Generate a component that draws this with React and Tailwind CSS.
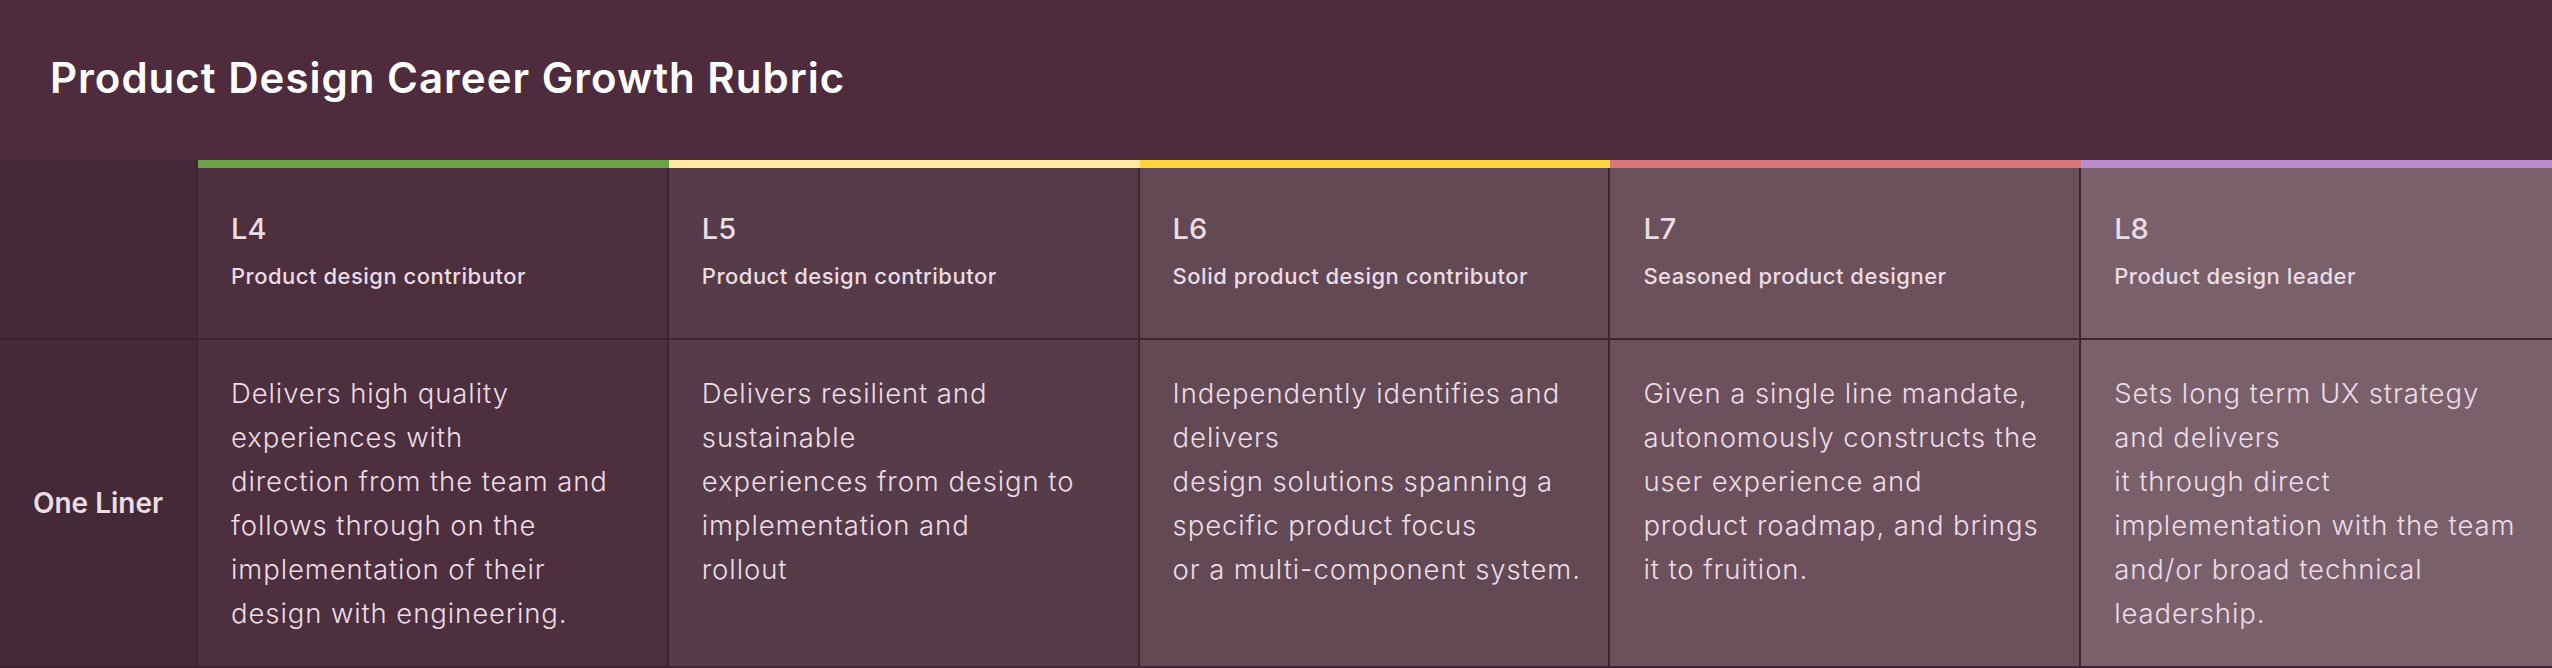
import React from "react";

const levels = [
  {
    code: "L4",
    title: "Product design contributor",
    bar: "bg-[#6ba246]",
    bg: "bg-[#4d2f3e]",
    border: "border-r-2",
    lines: [
      "Delivers high quality",
      "experiences with",
      "direction from the team and",
      "follows through on the",
      "implementation of their",
      "design with engineering.",
    ],
  },
  {
    code: "L5",
    title: "Product design contributor",
    bar: "bg-[#ffeaa1]",
    bg: "bg-[#563b49]",
    border: "border-r-2",
    lines: [
      "Delivers resilient and",
      "sustainable",
      "experiences from design to",
      "implementation and",
      "rollout",
    ],
  },
  {
    code: "L6",
    title: "Solid product design contributor",
    bar: "bg-[#fed43f]",
    bg: "bg-[#624954]",
    border: "border-r-2",
    lines: [
      "Independently identifies and",
      "delivers",
      "design solutions spanning a",
      "specific product focus",
      "or a multi-component system.",
    ],
  },
  {
    code: "L7",
    title: "Seasoned product designer",
    bar: "bg-[#d87777]",
    bg: "bg-[#6c505c]",
    border: "border-r-2",
    lines: [
      "Given a single line mandate,",
      "autonomously constructs the",
      "user experience and",
      "product roadmap, and brings",
      "it to fruition.",
    ],
  },
  {
    code: "L8",
    title: "Product design leader",
    bar: "bg-[#bb8ccb]",
    bg: "bg-[#79606b]",
    border: "border-r-0",
    lines: [
      "Sets long term UX strategy",
      "and delivers",
      "it through direct",
      "implementation with the team",
      "and/or broad technical",
      "leadership.",
    ],
  },
];

export default function App() {
  return (
    <div className="w-[2552px] h-[668px] overflow-hidden bg-[#4e2c3e] font-['Inter','Liberation_Sans',sans-serif] text-[#ecdde5]">
      <div className="h-[160px] pl-[50px] pt-[54px]">
        <h1 className="text-[42px] leading-[48px] font-semibold text-white tracking-[1px]">
          Product Design Career Growth Rubric
        </h1>
      </div>
      <div className="grid grid-cols-[198px_repeat(5,minmax(0,1fr))]">
        <div className="h-[180px] bg-[#432a36] border-r-2 border-b-2 border-[#3e2431]" />
        {levels.map((l) => (
          <div key={l.code} className={`flex flex-col ${l.bg}`}>
            <div className={`h-2 ${l.bar}`} />
            <div
              className={`h-[172px] ${l.border} border-b-2 border-[#3e2431] pl-[33px] pt-[43px] flex flex-col`}
            >
              <div className="text-[29px] leading-[36px] font-medium">{l.code}</div>
              <div className="mt-[15px] text-[22px] leading-[28px] font-medium tracking-[0.5px]">
                {l.title}
              </div>
            </div>
          </div>
        ))}
        <div className="h-[328px] bg-[#432a36] border-r-2 border-b-2 border-[#3e2431] flex items-center justify-center">
          <span className="text-[28px] leading-[36px] font-semibold">One Liner</span>
        </div>
        {levels.map((l) => (
          <div
            key={l.code + "b"}
            className={`h-[328px] ${l.bg} ${l.border} border-b-2 border-[#3e2431] pl-[33px] pt-[31px]`}
          >
            <div className="text-[27.5px] leading-[44px] font-light tracking-[0.9px] whitespace-nowrap">
              {l.lines.map((line, i) => (
                <div key={i}>{line}</div>
              ))}
            </div>
          </div>
        ))}
      </div>
    </div>
  );
}
